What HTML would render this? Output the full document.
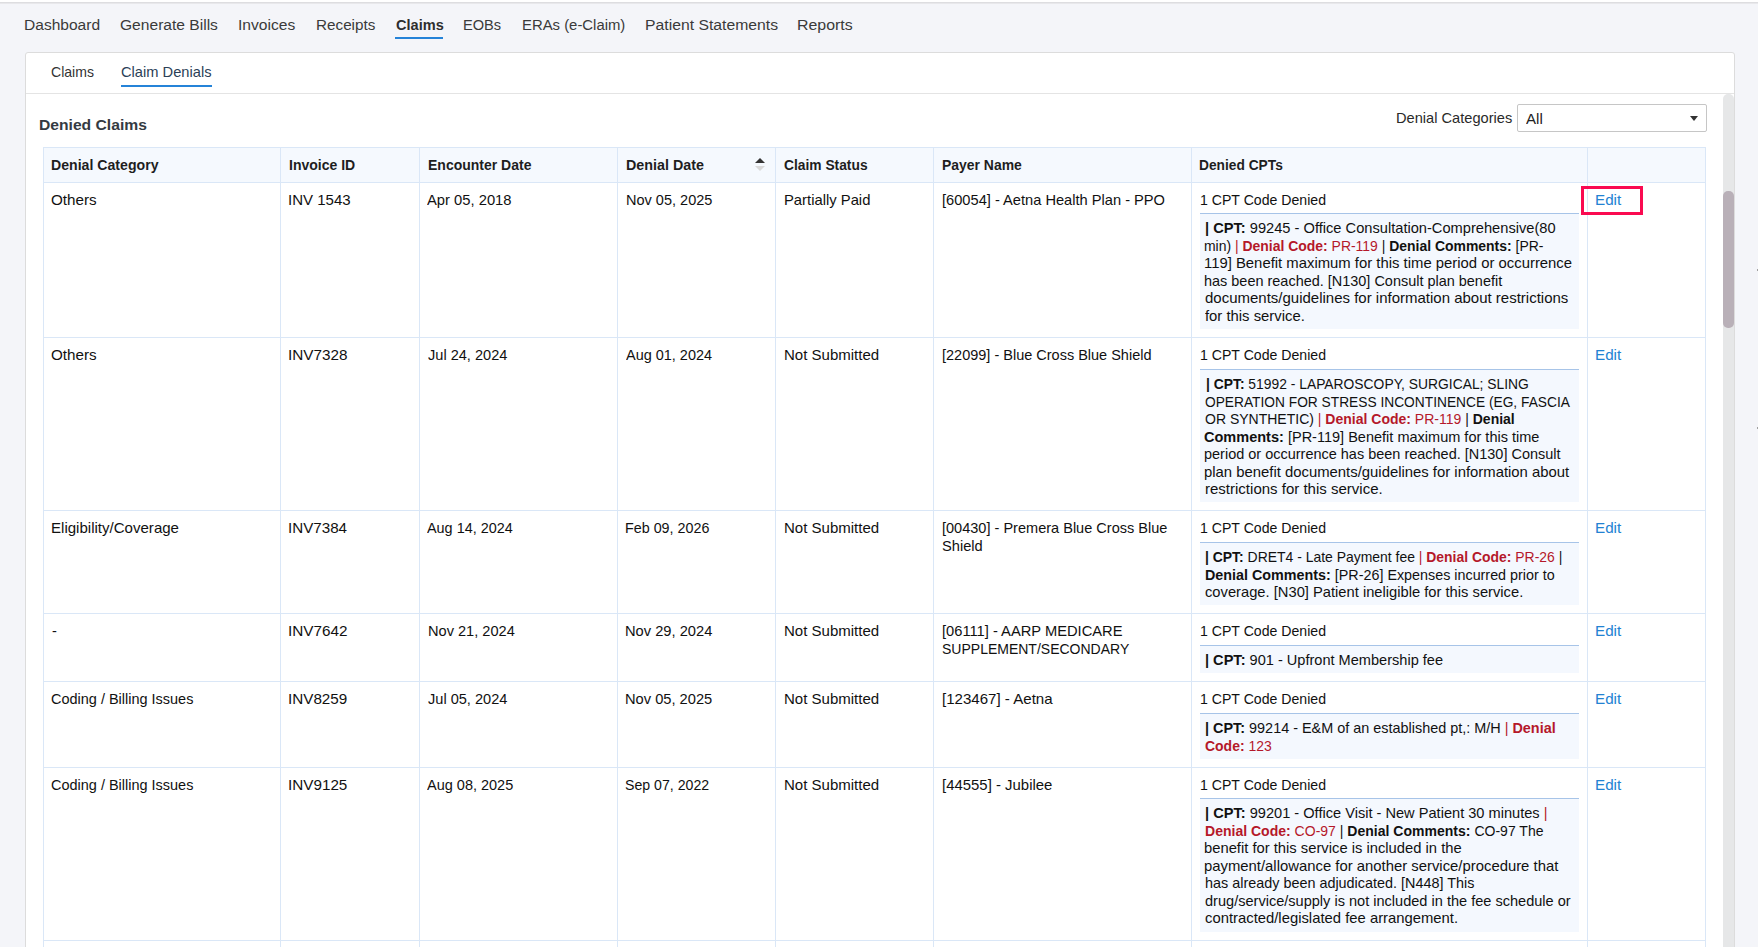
<!DOCTYPE html>
<html><head><meta charset="utf-8"><title>Claim Denials</title>
<style>
html,body{margin:0;padding:0;}
body{width:1758px;height:947px;overflow:hidden;position:relative;background:#f4f5f9;font-family:"Liberation Sans",sans-serif;}
body div{position:absolute;}
.t{white-space:pre;line-height:20px;transform-origin:0 0;}
.t b{font-weight:700;}
</style></head><body>
<div style="left:0px;top:0px;width:1758px;height:2px;background:#ffffff;"></div>
<div style="left:0px;top:2px;width:1758px;height:1px;background:#dddde0;"></div>
<div style="left:0px;top:3px;width:1758px;height:1px;background:#e8e8eb;"></div>
<div style="left:395px;top:37px;width:48px;height:2px;background:#2583d8;"></div>
<div style="left:25px;top:52px;width:1708px;height:920px;background:#fff;border:1px solid #dcdcdc;border-radius:3px;"></div>
<div style="left:121px;top:85px;width:91px;height:2px;background:#2583d8;"></div>
<div style="left:26px;top:93px;width:1708px;height:1px;background:#e4e4e4;"></div>
<div style="left:1517px;top:104px;width:188px;height:26px;background:#fff;border:1px solid #c6c6c6;border-radius:2px;"></div>
<div style="left:1689.5px;top:116px;width:0;height:0;border-left:4.5px solid transparent;border-right:4.5px solid transparent;border-top:5px solid #333;"></div>
<div style="left:43px;top:147px;width:1663px;height:35px;background:#f5f9fe;"></div>
<div style="left:43px;top:147px;width:1663px;height:1px;background:#dae7f7;"></div>
<div style="left:43px;top:182px;width:1663px;height:1px;background:#dae7f7;"></div>
<div style="left:43px;top:337px;width:1663px;height:1px;background:#dae7f7;"></div>
<div style="left:43px;top:510px;width:1663px;height:1px;background:#dae7f7;"></div>
<div style="left:43px;top:613px;width:1663px;height:1px;background:#dae7f7;"></div>
<div style="left:43px;top:681px;width:1663px;height:1px;background:#dae7f7;"></div>
<div style="left:43px;top:767px;width:1663px;height:1px;background:#dae7f7;"></div>
<div style="left:43px;top:940px;width:1663px;height:1px;background:#dae7f7;"></div>
<div style="left:43px;top:147px;width:1px;height:800px;background:#dae7f7;"></div>
<div style="left:280px;top:147px;width:1px;height:800px;background:#dae7f7;"></div>
<div style="left:419px;top:147px;width:1px;height:800px;background:#dae7f7;"></div>
<div style="left:617px;top:147px;width:1px;height:800px;background:#dae7f7;"></div>
<div style="left:775px;top:147px;width:1px;height:800px;background:#dae7f7;"></div>
<div style="left:933px;top:147px;width:1px;height:800px;background:#dae7f7;"></div>
<div style="left:1191px;top:147px;width:1px;height:800px;background:#dae7f7;"></div>
<div style="left:1587px;top:147px;width:1px;height:800px;background:#dae7f7;"></div>
<div style="left:1705px;top:147px;width:1px;height:800px;background:#dae7f7;"></div>
<div style="left:1200px;top:214px;width:379px;height:115px;background:#f4f8fe;"></div>
<div style="left:1200px;top:213px;width:379px;height:1px;background:#a7c4e8;"></div>
<div style="left:1200px;top:370px;width:379px;height:132px;background:#f4f8fe;"></div>
<div style="left:1200px;top:369px;width:379px;height:1px;background:#a7c4e8;"></div>
<div style="left:1200px;top:543px;width:379px;height:62px;background:#f4f8fe;"></div>
<div style="left:1200px;top:542px;width:379px;height:1px;background:#a7c4e8;"></div>
<div style="left:1200px;top:646px;width:379px;height:27px;background:#f4f8fe;"></div>
<div style="left:1200px;top:645px;width:379px;height:1px;background:#a7c4e8;"></div>
<div style="left:1200px;top:714px;width:379px;height:45px;background:#f4f8fe;"></div>
<div style="left:1200px;top:713px;width:379px;height:1px;background:#a7c4e8;"></div>
<div style="left:1200px;top:799px;width:379px;height:133px;background:#f4f8fe;"></div>
<div style="left:1200px;top:798px;width:379px;height:1px;background:#a7c4e8;"></div>
<div style="left:1581px;top:186px;width:56px;height:23px;border:3px solid #fa0a50;"></div>
<div style="left:755px;top:158px;width:0;height:0;border-left:5px solid transparent;border-right:5px solid transparent;border-bottom:5px solid #333;"></div>
<div style="left:755px;top:166px;width:0;height:0;border-left:5px solid transparent;border-right:5px solid transparent;border-top:5px solid #d9d9d9;"></div>
<div style="left:1723px;top:94px;width:11px;height:900px;background:#e6e7e8;border-radius:5px 5px 0 0;"></div>
<div style="left:1723px;top:191px;width:11px;height:137px;background:#b9b0b8;border-radius:5px;"></div>
<div style="left:1757px;top:269px;width:1px;height:2px;background:#a0a0a0;"></div>
<div style="left:1757px;top:427px;width:1px;height:2px;background:#a0a0a0;"></div>
<div class="t" id="nav0" style="left:23.79px;top:15px;font-size:15.5px;font-weight:400;color:#3a3a3a;transform:scaleX(1.0035);">Dashboard</div>
<div class="t" id="nav1" style="left:120.22px;top:15px;font-size:15.5px;font-weight:400;color:#3a3a3a;transform:scaleX(1.0056);">Generate Bills</div>
<div class="t" id="nav2" style="left:237.92px;top:15px;font-size:15.5px;font-weight:400;color:#3a3a3a;transform:scaleX(1.0064);">Invoices</div>
<div class="t" id="nav3" style="left:315.86px;top:15px;font-size:15.5px;font-weight:400;color:#3a3a3a;transform:scaleX(0.9845);">Receipts</div>
<div class="t" id="nav4" style="left:462.90px;top:15px;font-size:15.5px;font-weight:400;color:#3a3a3a;transform:scaleX(0.9421);">EOBs</div>
<div class="t" id="nav5" style="left:521.51px;top:15px;font-size:15.5px;font-weight:400;color:#3a3a3a;transform:scaleX(0.9598);">ERAs (e-Claim)</div>
<div class="t" id="nav6" style="left:644.56px;top:15px;font-size:15.5px;font-weight:400;color:#3a3a3a;transform:scaleX(1.0159);">Patient Statements</div>
<div class="t" id="nav7" style="left:797.06px;top:15px;font-size:15.5px;font-weight:400;color:#3a3a3a;transform:scaleX(1.0260);">Reports</div>
<div class="t" id="navclaims" style="left:395.54px;top:15px;font-size:15.5px;font-weight:700;color:#2e2e2e;transform:scaleX(0.9395);">Claims</div>
<div class="t" id="sub0" style="left:50.66px;top:62px;font-size:14.5px;font-weight:400;color:#333;transform:scaleX(0.9686);">Claims</div>
<div class="t" id="sub1" style="left:120.51px;top:62px;font-size:14.5px;font-weight:400;color:#2b3f57;transform:scaleX(1.0116);">Claim Denials</div>
<div class="t" id="title" style="left:39.10px;top:115px;font-size:15.5px;font-weight:700;color:#343a42;transform:scaleX(1.0098);">Denied Claims</div>
<div class="t" id="dclabel" style="left:1395.96px;top:108px;font-size:14.5px;font-weight:400;color:#2a2a2a;transform:scaleX(1.0083);">Denial Categories</div>
<div class="t" id="all" style="left:1525.89px;top:109px;font-size:14.5px;font-weight:400;color:#222;transform:scaleX(1.0383);">All</div>
<div class="t" id="h0" style="left:51.08px;top:155px;font-size:14.5px;font-weight:700;color:#1e1e1e;transform:scaleX(0.9737);">Denial Category</div>
<div class="t" id="h1" style="left:289.06px;top:155px;font-size:14.5px;font-weight:700;color:#1e1e1e;transform:scaleX(0.9669);">Invoice ID</div>
<div class="t" id="h2" style="left:427.88px;top:155px;font-size:14.5px;font-weight:700;color:#1e1e1e;transform:scaleX(0.9653);">Encounter Date</div>
<div class="t" id="h3" style="left:626.36px;top:155px;font-size:14.5px;font-weight:700;color:#1e1e1e;transform:scaleX(0.9873);">Denial Date</div>
<div class="t" id="h4" style="left:784.12px;top:155px;font-size:14.5px;font-weight:700;color:#1e1e1e;transform:scaleX(0.9515);">Claim Status</div>
<div class="t" id="h5" style="left:941.88px;top:155px;font-size:14.5px;font-weight:700;color:#1e1e1e;transform:scaleX(0.9608);">Payer Name</div>
<div class="t" id="h6" style="left:1199.01px;top:155px;font-size:14.5px;font-weight:700;color:#1e1e1e;transform:scaleX(0.9487);">Denied CPTs</div>
<div class="t" id="r0c0" style="left:51.31px;top:190px;font-size:14.5px;font-weight:400;color:#111;transform:scaleX(1.0501);">Others</div>
<div class="t" id="r0c1" style="left:288.47px;top:190px;font-size:14.5px;font-weight:400;color:#111;transform:scaleX(1.0364);">INV 1543</div>
<div class="t" id="r0c2" style="left:427.34px;top:190px;font-size:14.5px;font-weight:400;color:#111;transform:scaleX(1.0178);">Apr 05, 2018</div>
<div class="t" id="r0c3" style="left:625.67px;top:190px;font-size:14.5px;font-weight:400;color:#111;transform:scaleX(1.0012);">Nov 05, 2025</div>
<div class="t" id="r0c4" style="left:784.37px;top:190px;font-size:14.5px;font-weight:400;color:#111;transform:scaleX(1.0208);">Partially Paid</div>
<div class="t" id="r0c5" style="left:941.61px;top:190px;font-size:14.5px;font-weight:400;color:#111;transform:scaleX(1.0097);">[60054] - Aetna Health Plan - PPO</div>
<div class="t" id="r0cpt" style="left:1200.43px;top:190px;font-size:14.5px;font-weight:400;color:#111;transform:scaleX(0.9730);">1 CPT Code Denied</div>
<div class="t" id="r0edit" style="left:1595.10px;top:190px;font-size:14.5px;font-weight:400;color:#2282d2;transform:scaleX(1.0481);">Edit</div>
<div class="t" id="r0l0" style="left:1205.30px;top:218.0px;font-size:14.5px;font-weight:400;color:#111;transform:scaleX(1.0100);"><b>| CPT:</b> 99245 - Office Consultation-Comprehensive(80</div>
<div class="t" id="r0l1" style="left:1204.47px;top:235.5px;font-size:14.5px;font-weight:400;color:#111;transform:scaleX(0.9617);">min) <span style="color:#b5182a">| <b>Denial Code:</b> PR-119</span> | <b>Denial Comments:</b> [PR-</div>
<div class="t" id="r0l2" style="left:1203.90px;top:253.0px;font-size:14.5px;font-weight:400;color:#111;transform:scaleX(1.0248);">119] Benefit maximum for this time period or occurrence</div>
<div class="t" id="r0l3" style="left:1204.32px;top:270.5px;font-size:14.5px;font-weight:400;color:#111;transform:scaleX(0.9971);">has been reached. [N130] Consult plan benefit</div>
<div class="t" id="r0l4" style="left:1205.07px;top:288.0px;font-size:14.5px;font-weight:400;color:#111;transform:scaleX(1.0339);">documents/guidelines for information about restrictions</div>
<div class="t" id="r0l5" style="left:1204.79px;top:305.5px;font-size:14.5px;font-weight:400;color:#111;transform:scaleX(1.0231);">for this service.</div>
<div class="t" id="r1c0" style="left:51.31px;top:345px;font-size:14.5px;font-weight:400;color:#111;transform:scaleX(1.0501);">Others</div>
<div class="t" id="r1c1" style="left:288.47px;top:345px;font-size:14.5px;font-weight:400;color:#111;transform:scaleX(1.0544);">INV7328</div>
<div class="t" id="r1c2" style="left:427.62px;top:345px;font-size:14.5px;font-weight:400;color:#111;transform:scaleX(1.0044);">Jul 24, 2024</div>
<div class="t" id="r1c3" style="left:625.94px;top:345px;font-size:14.5px;font-weight:400;color:#111;transform:scaleX(0.9972);">Aug 01, 2024</div>
<div class="t" id="r1c4" style="left:784.24px;top:345px;font-size:14.5px;font-weight:400;color:#111;transform:scaleX(1.0357);">Not Submitted</div>
<div class="t" id="r1c5" style="left:941.72px;top:345px;font-size:14.5px;font-weight:400;color:#111;transform:scaleX(0.9997);">[22099] - Blue Cross Blue Shield</div>
<div class="t" id="r1cpt" style="left:1200.43px;top:345px;font-size:14.5px;font-weight:400;color:#111;transform:scaleX(0.9730);">1 CPT Code Denied</div>
<div class="t" id="r1edit" style="left:1595.10px;top:345px;font-size:14.5px;font-weight:400;color:#2282d2;transform:scaleX(1.0481);">Edit</div>
<div class="t" id="r1l0" style="left:1205.55px;top:374.0px;font-size:14.5px;font-weight:400;color:#111;transform:scaleX(0.9554);"><b>| CPT:</b> 51992 - LAPAROSCOPY, SURGICAL; SLING</div>
<div class="t" id="r1l1" style="left:1205.01px;top:391.5px;font-size:14.5px;font-weight:400;color:#111;transform:scaleX(0.9482);">OPERATION FOR STRESS INCONTINENCE (EG, FASCIA</div>
<div class="t" id="r1l2" style="left:1204.78px;top:409.0px;font-size:14.5px;font-weight:400;color:#111;transform:scaleX(0.9659);">OR SYNTHETIC) <span style="color:#b5182a">| <b>Denial Code:</b> PR-119</span> | <b>Denial</b></div>
<div class="t" id="r1l3" style="left:1204.36px;top:426.5px;font-size:14.5px;font-weight:400;color:#111;transform:scaleX(1.0014);"><b>Comments:</b> [PR-119] Benefit maximum for this time</div>
<div class="t" id="r1l4" style="left:1204.48px;top:444.0px;font-size:14.5px;font-weight:400;color:#111;transform:scaleX(0.9985);">period or occurrence has been reached. [N130] Consult</div>
<div class="t" id="r1l5" style="left:1204.48px;top:461.5px;font-size:14.5px;font-weight:400;color:#111;transform:scaleX(1.0250);">plan benefit documents/guidelines for information about</div>
<div class="t" id="r1l6" style="left:1205.35px;top:479.0px;font-size:14.5px;font-weight:400;color:#111;transform:scaleX(1.0354);">restrictions for this service.</div>
<div class="t" id="r2c0" style="left:50.92px;top:518px;font-size:14.5px;font-weight:400;color:#111;transform:scaleX(1.0380);">Eligibility/Coverage</div>
<div class="t" id="r2c1" style="left:288.47px;top:518px;font-size:14.5px;font-weight:400;color:#111;transform:scaleX(1.0457);">INV7384</div>
<div class="t" id="r2c2" style="left:427.34px;top:518px;font-size:14.5px;font-weight:400;color:#111;transform:scaleX(0.9933);">Aug 14, 2024</div>
<div class="t" id="r2c3" style="left:625.09px;top:518px;font-size:14.5px;font-weight:400;color:#111;transform:scaleX(0.9875);">Feb 09, 2026</div>
<div class="t" id="r2c4" style="left:784.24px;top:518px;font-size:14.5px;font-weight:400;color:#111;transform:scaleX(1.0357);">Not Submitted</div>
<div class="t" id="r2c5" style="left:941.61px;top:518px;font-size:14.5px;font-weight:400;color:#111;transform:scaleX(1.0024);">[00430] - Premera Blue Cross Blue</div>
<div class="t" id="r2c5b" style="left:941.72px;top:536px;font-size:14.5px;font-weight:400;color:#111;transform:scaleX(1.0093);">Shield</div>
<div class="t" id="r2cpt" style="left:1200.43px;top:518px;font-size:14.5px;font-weight:400;color:#111;transform:scaleX(0.9730);">1 CPT Code Denied</div>
<div class="t" id="r2edit" style="left:1595.10px;top:518px;font-size:14.5px;font-weight:400;color:#2282d2;transform:scaleX(1.0481);">Edit</div>
<div class="t" id="r2l0" style="left:1205.45px;top:547.0px;font-size:14.5px;font-weight:400;color:#111;transform:scaleX(0.9609);"><b>| CPT:</b> DRET4 - Late Payment fee <span style="color:#b5182a">| <b>Denial Code:</b> PR-26</span> |</div>
<div class="t" id="r2l1" style="left:1204.60px;top:564.5px;font-size:14.5px;font-weight:400;color:#111;transform:scaleX(0.9884);"><b>Denial Comments:</b> [PR-26] Expenses incurred prior to</div>
<div class="t" id="r2l2" style="left:1205.20px;top:582.0px;font-size:14.5px;font-weight:400;color:#111;transform:scaleX(1.0150);">coverage. [N30] Patient ineligible for this service.</div>
<div class="t" id="r3c0" style="left:51.73px;top:621px;font-size:14.5px;font-weight:400;color:#111;transform:scaleX(1.0032);">-</div>
<div class="t" id="r3c1" style="left:288.47px;top:621px;font-size:14.5px;font-weight:400;color:#111;transform:scaleX(1.0552);">INV7642</div>
<div class="t" id="r3c2" style="left:427.85px;top:621px;font-size:14.5px;font-weight:400;color:#111;transform:scaleX(1.0060);">Nov 21, 2024</div>
<div class="t" id="r3c3" style="left:624.97px;top:621px;font-size:14.5px;font-weight:400;color:#111;transform:scaleX(1.0126);">Nov 29, 2024</div>
<div class="t" id="r3c4" style="left:784.24px;top:621px;font-size:14.5px;font-weight:400;color:#111;transform:scaleX(1.0357);">Not Submitted</div>
<div class="t" id="r3c5" style="left:941.61px;top:621px;font-size:14.5px;font-weight:400;color:#111;transform:scaleX(1.0134);">[06111] - AARP MEDICARE</div>
<div class="t" id="r3c5b" style="left:941.72px;top:639px;font-size:14.5px;font-weight:400;color:#111;transform:scaleX(0.9656);">SUPPLEMENT/SECONDARY</div>
<div class="t" id="r3cpt" style="left:1200.43px;top:621px;font-size:14.5px;font-weight:400;color:#111;transform:scaleX(0.9730);">1 CPT Code Denied</div>
<div class="t" id="r3edit" style="left:1595.10px;top:621px;font-size:14.5px;font-weight:400;color:#2282d2;transform:scaleX(1.0481);">Edit</div>
<div class="t" id="r3l0" style="left:1205.30px;top:650.0px;font-size:14.5px;font-weight:400;color:#111;transform:scaleX(1.0045);"><b>| CPT:</b> 901 - Upfront Membership fee</div>
<div class="t" id="r4c0" style="left:51.27px;top:689px;font-size:14.5px;font-weight:400;color:#111;transform:scaleX(0.9980);">Coding / Billing Issues</div>
<div class="t" id="r4c1" style="left:288.47px;top:689px;font-size:14.5px;font-weight:400;color:#111;transform:scaleX(1.0505);">INV8259</div>
<div class="t" id="r4c2" style="left:427.62px;top:689px;font-size:14.5px;font-weight:400;color:#111;transform:scaleX(1.0044);">Jul 05, 2024</div>
<div class="t" id="r4c3" style="left:624.97px;top:689px;font-size:14.5px;font-weight:400;color:#111;transform:scaleX(1.0115);">Nov 05, 2025</div>
<div class="t" id="r4c4" style="left:784.24px;top:689px;font-size:14.5px;font-weight:400;color:#111;transform:scaleX(1.0357);">Not Submitted</div>
<div class="t" id="r4c5" style="left:941.61px;top:689px;font-size:14.5px;font-weight:400;color:#111;transform:scaleX(1.0396);">[123467] - Aetna</div>
<div class="t" id="r4cpt" style="left:1200.43px;top:689px;font-size:14.5px;font-weight:400;color:#111;transform:scaleX(0.9730);">1 CPT Code Denied</div>
<div class="t" id="r4edit" style="left:1595.10px;top:689px;font-size:14.5px;font-weight:400;color:#2282d2;transform:scaleX(1.0481);">Edit</div>
<div class="t" id="r4l0" style="left:1205.33px;top:718.0px;font-size:14.5px;font-weight:400;color:#111;transform:scaleX(0.9941);"><b>| CPT:</b> 99214 - E&amp;M of an established pt,: M/H <span style="color:#b5182a">| <b>Denial</b></span></div>
<div class="t" id="r4l1" style="left:1205.14px;top:735.5px;font-size:14.5px;font-weight:400;color:#111;transform:scaleX(0.9631);"><span style="color:#b5182a"><b>Code:</b> 123</span></div>
<div class="t" id="r5c0" style="left:51.27px;top:775px;font-size:14.5px;font-weight:400;color:#111;transform:scaleX(0.9980);">Coding / Billing Issues</div>
<div class="t" id="r5c1" style="left:288.47px;top:775px;font-size:14.5px;font-weight:400;color:#111;transform:scaleX(1.0515);">INV9125</div>
<div class="t" id="r5c2" style="left:427.34px;top:775px;font-size:14.5px;font-weight:400;color:#111;transform:scaleX(0.9997);">Aug 08, 2025</div>
<div class="t" id="r5c3" style="left:624.65px;top:775px;font-size:14.5px;font-weight:400;color:#111;transform:scaleX(0.9760);">Sep 07, 2022</div>
<div class="t" id="r5c4" style="left:784.24px;top:775px;font-size:14.5px;font-weight:400;color:#111;transform:scaleX(1.0357);">Not Submitted</div>
<div class="t" id="r5c5" style="left:941.61px;top:775px;font-size:14.5px;font-weight:400;color:#111;transform:scaleX(1.0297);">[44555] - Jubilee</div>
<div class="t" id="r5cpt" style="left:1200.43px;top:775px;font-size:14.5px;font-weight:400;color:#111;transform:scaleX(0.9730);">1 CPT Code Denied</div>
<div class="t" id="r5edit" style="left:1595.10px;top:775px;font-size:14.5px;font-weight:400;color:#2282d2;transform:scaleX(1.0481);">Edit</div>
<div class="t" id="r5l0" style="left:1205.30px;top:803.0px;font-size:14.5px;font-weight:400;color:#111;transform:scaleX(1.0070);"><b>| CPT:</b> 99201 - Office Visit - New Patient 30 minutes <span style="color:#b5182a">|</span></div>
<div class="t" id="r5l1" style="left:1204.51px;top:820.5px;font-size:14.5px;font-weight:400;color:#111;transform:scaleX(0.9671);"><span style="color:#b5182a"><b>Denial Code:</b> CO-97</span> | <b>Denial Comments:</b> CO-97 The</div>
<div class="t" id="r5l2" style="left:1204.48px;top:838.0px;font-size:14.5px;font-weight:400;color:#111;transform:scaleX(1.0182);">benefit for this service is included in the</div>
<div class="t" id="r5l3" style="left:1204.48px;top:855.5px;font-size:14.5px;font-weight:400;color:#111;transform:scaleX(1.0246);">payment/allowance for another service/procedure that</div>
<div class="t" id="r5l4" style="left:1205.35px;top:873.0px;font-size:14.5px;font-weight:400;color:#111;transform:scaleX(0.9924);">has already been adjudicated. [N448] This</div>
<div class="t" id="r5l5" style="left:1205.20px;top:890.5px;font-size:14.5px;font-weight:400;color:#111;transform:scaleX(1.0037);">drug/service/supply is not included in the fee schedule or</div>
<div class="t" id="r5l6" style="left:1205.20px;top:908.0px;font-size:14.5px;font-weight:400;color:#111;transform:scaleX(1.0228);">contracted/legislated fee arrangement.</div>
</body></html>
